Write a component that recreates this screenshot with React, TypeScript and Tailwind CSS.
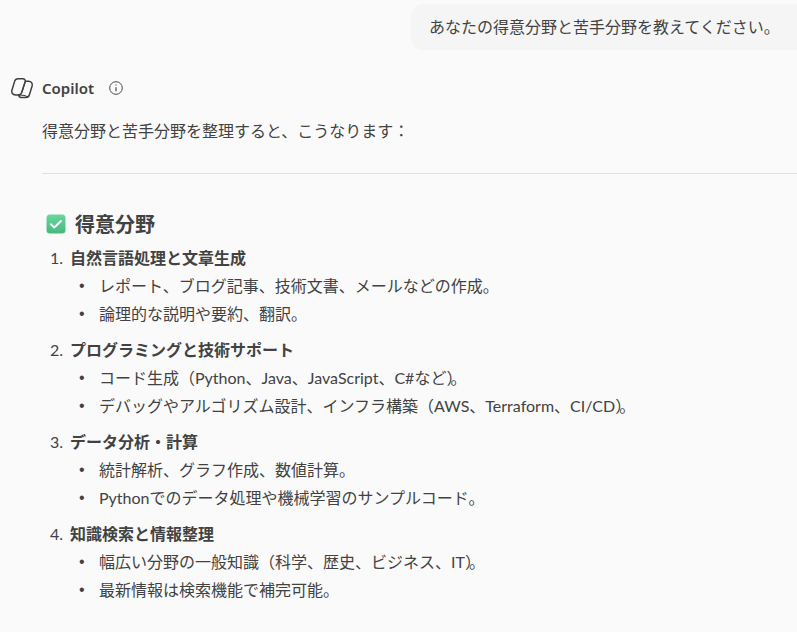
const font = "[font-family:'Lato','Noto_Sans_CJK_JP',sans-serif]";

const sections = [
  {
    title: "自然言語処理と文章生成",
    items: ["レポート、ブログ記事、技術文書、メールなどの作成。", "論理的な説明や要約、翻訳。"],
  },
  {
    title: "プログラミングと技術サポート",
    items: ["コード生成（Python、Java、JavaScript、C#など）。", "デバッグやアルゴリズム設計、インフラ構築（AWS、Terraform、CI/CD）。"],
  },
  {
    title: "データ分析・計算",
    items: ["統計解析、グラフ作成、数値計算。", "Pythonでのデータ処理や機械学習のサンプルコード。"],
  },
  {
    title: "知識検索と情報整理",
    items: ["幅広い分野の一般知識（科学、歴史、ビジネス、IT）。", "最新情報は検索機能で補完可能。"],
  },
];

function CopilotIcon() {
  return (
    <svg width="24" height="24" viewBox="0 0 24 24" fill="none" stroke="#404040" strokeWidth="1.500" strokeLinejoin="round">
      <path d="M8.200 2.700h4.600c1.800 0 2.900 1.500 2.300 3.200l-3.300 10.400c-.6 1.700-1.900 2.700-3.600 2.700H5.400c-2.700 0-4.200-2.300-3.500-4.800l2.700-8.800C5.100 3.600 6.500 2.700 8.200 2.700z" />
      <path d="M15.100 5.200h3.500c2.700 0 4.200 2.300 3.500 4.800l-2.700 8.800c-.5 1.800-1.900 2.700-3.600 2.700h-4.600c-1.800 0-2.900-1.500-2.300-3.200" />
      <path d="M11.800 16.300l3.300-10.400M8.500 19c4 0 7.500.2 9.500 2.300" strokeWidth="1.200" />
    </svg>
  );
}

function CheckEmoji() {
  return (
    <svg width="20" height="20" viewBox="0 0 20 20">
      <defs>
        <linearGradient id="check-bg" x1="0" y1="0" x2="0" y2="1">
          <stop offset="0" stopColor="#6ad79c" />
          <stop offset="1" stopColor="#46b97f" />
        </linearGradient>
      </defs>
      <rect x="0.500" y="0.500" width="19" height="19" rx="3.500" fill="url(#check-bg)" />
      <path d="M5 10.200l3.300 3.300L15 7" fill="none" stroke="#f2fbf6" strokeWidth="2" strokeLinecap="round" strokeLinejoin="round" />
    </svg>
  );
}

// closing bracket + 。 sits tight in the reference
function ItemText({ text }: { text: string }) {
  if (!text.endsWith("）。")) return <span className="whitespace-nowrap">{text}</span>;
  return (
    <span className="whitespace-nowrap">
      {text.slice(0, -2)}
      <span className="tracking-[-4px]">）</span>。
    </span>
  );
}

export default function App() {
  return (
    <div className={`h-[632px] w-[797px] overflow-hidden bg-[#fafafa] text-[16px] text-[#424242] ${font}`}>
      <div className="flex justify-end pt-1">
        <div className="h-[46px] w-[386px] rounded-l-xl bg-[#f5f5f5] pl-[18px] leading-[46px]">
          あなたの得意分野と苦手分野を教えてください。
        </div>
      </div>

      <div className="mt-[26px] flex h-6 items-center pl-[10px]">
        <CopilotIcon />
        <span className="ml-2 text-[15px] font-semibold [font-family:'Noto_Sans',sans-serif]">Copilot</span>
        <svg className="ml-[14px]" width="16" height="16" viewBox="0 0 16 16" fill="none" stroke="#4a4a4a">
          <circle cx="8" cy="8" r="6.300" />
          <path d="M8 7.200v4M8 4.600v1" strokeWidth="1.200" />
        </svg>
      </div>

      <div className="pl-[42px]">
        <p className="mt-[17px] leading-7">得意分野と苦手分野を整理すると、こうなります：</p>
        <hr className="mt-[28px] border-[#e0e0e0]" />
        <h2 className="mt-[36px] flex h-7 items-center text-[20px] font-bold">
          <span className="ml-1 mr-[9px] flex"><CheckEmoji /></span>
          得意分野
        </h2>
        <ol className="mt-[6px]">
          {sections.map((section, i) => (
            <li key={section.title} className="mb-2">
              <div className="flex h-7 items-center">
                <span className="w-7 pl-[8px]">{i + 1}.</span>
                <strong className="font-bold">{section.title}</strong>
              </div>
              <ul>
                {section.items.map((item) => (
                  <li key={item} className="flex h-7 items-center">
                    <span className="w-[57px] pl-[37px] [font-family:'Liberation_Sans',sans-serif]">•</span>
                    <ItemText text={item} />
                  </li>
                ))}
              </ul>
            </li>
          ))}
        </ol>
      </div>
    </div>
  );
}
